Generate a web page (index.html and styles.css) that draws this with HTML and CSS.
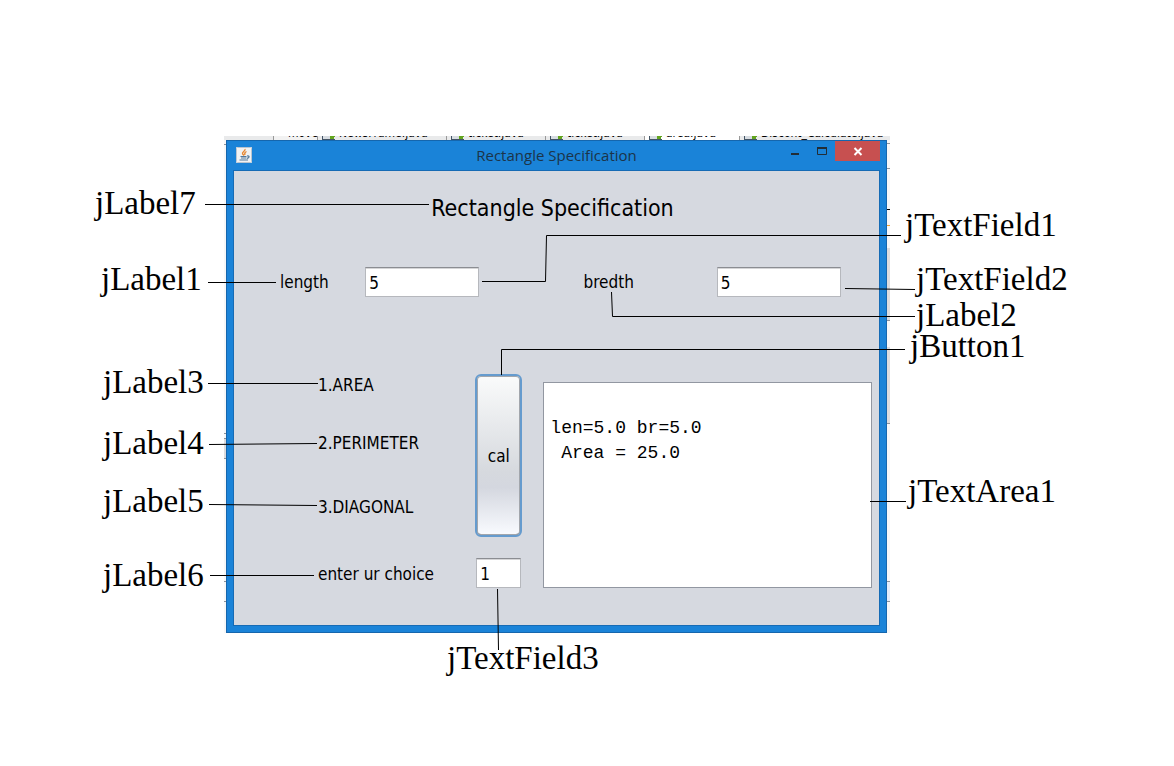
FILE: index.html
```
<!DOCTYPE html>
<html lang="en">
<head>
<meta charset="utf-8">
<title>Rectangle Specification</title>
<link rel="stylesheet" href="styles.css">
</head>
<body>
<main class="diagram">
  <div class="backdrop">
    <div class="tabs">
      <span class="tab tab-first">move</span>
      <span class="tab tab-news"><i class="file"></i>NewsFrame.java</span>
      <span class="tab tab-ticket"><i class="file"></i>ticket.java</span>
      <span class="tab tab-ticket"><i class="file"></i>ticket.java</span>
      <span class="tab tab-area"><i class="file"></i>area.java</span>
      <span class="tab tab-last"><i class="file"></i>Discont_Calculate.java</span>
    </div>
    <section class="window">
      <header class="titlebar">
        <svg class="java" viewBox="0 0 16 16" aria-hidden="true">
          <rect width="16" height="16" rx="1" fill="#f1f2f3"/>
          <rect x=".5" y=".5" width="15" height="15" rx="1" fill="none" stroke="#b9c4cf"/>
          <path d="M9 2C10 4 5.500 5 6.500 6.800L8 8.500M10.500 4.500C8 5.500 8.500 6.500 9 8" fill="none" stroke="#e8862e" stroke-width="1.300"/>
          <path d="M4.500 9.500H10.500M5 11H10.500M11 9C14 8.500 13.500 11 11 11.300M3.500 13H12" fill="none" stroke="#54799c" stroke-width="1.200"/>
        </svg>
        <span class="caption">Rectangle Specification</span>
        <div class="controls">
          <button class="control" aria-label="Minimize"><svg viewBox="0 0 27 20"><path d="M10 13H18" stroke="#222d36" stroke-width="2"/></svg></button>
          <button class="control" aria-label="Maximize"><svg viewBox="0 0 27 20"><path d="M9.500 7V13.500H18.500V7" fill="none" stroke="#222d36"/><path d="M9 7H19" stroke="#222d36" stroke-width="2"/></svg></button>
          <button class="control close" aria-label="Close"><svg viewBox="0 0 45 20"><path d="M19.500 7L26.500 14M26.500 7L19.500 14" stroke="#fff" stroke-width="2"/></svg></button>
        </div>
      </header>
      <form class="client">
        <h1 class="heading">Rectangle Specification</h1>
        <div class="sizes">
          <label for="length">length</label>
          <input id="length" class="field" value="5">
          <label class="bredth" for="bredth">bredth</label>
          <input id="bredth" class="field" value="5">
        </div>
        <div class="work">
          <div class="choices">
            <span>1.AREA</span>
            <span>2.PERIMETER</span>
            <span>3.DIAGONAL</span>
            <label for="choice">enter ur choice</label>
          </div>
          <div class="action">
            <button type="button" class="cal">cal</button>
            <input id="choice" class="field" value="1">
          </div>
          <textarea class="result" aria-label="Result">

len=5.0 br=5.0
 Area = 25.0</textarea>
        </div>
      </form>
    </section>
  </div>

  <svg class="leaders" viewBox="0 0 1174 766" preserveAspectRatio="none" aria-hidden="true">
    <g fill="#dcdcde">
      <rect x="887" y="248" width="3" height="72"/>
      <rect x="887" y="347" width="3" height="76"/>
      <rect x="887" y="582" width="3" height="19" fill="#e3edfa"/>
      <rect x="224" y="439" width="2" height="19"/>
      <rect x="887" y="209" width="3" height="1" fill="#000"/>
      <rect x="887" y="225" width="3" height="1" fill="#f0a030"/>
    </g>
    <path class="tick" d="M224 144.500h2M224 433.500h2M224 438.500h2M224 458.500h2M224 581.500h2M224 601.500h2M887 143.500h3M887 168.500h3M887 320.500h3M887 423.500h3M887 581.500h3M887 601.500h3"/>
    <path class="line" d="M205 204.500H429M208 282.500H276M208 383.500H318M209 444.500L317 443.500M209 504.500L317 505.500M210 575.500H314M482 281.500H545.500L546.500 235.500H901M845 288.500L915 289.500M611.500 292L612.500 316.500H915M501.500 375V349.500H905M870 501.500H906M497.500 589L498.500 650"/>
  </svg>

  <span class="callout label7">jLabel7</span>
  <span class="callout label1">jLabel1</span>
  <span class="callout label3">jLabel3</span>
  <span class="callout label4">jLabel4</span>
  <span class="callout label5">jLabel5</span>
  <span class="callout label6">jLabel6</span>
  <span class="callout field1">jTextField1</span>
  <span class="callout field2">jTextField2</span>
  <span class="callout label2">jLabel2</span>
  <span class="callout button1">jButton1</span>
  <span class="callout area1">jTextArea1</span>
  <span class="callout field3">jTextField3</span>
</main>
</body>
</html>
```
FILE: styles.css
```
* { box-sizing: border-box; }
body { margin: 0; background: #fff; color: #000; }

.diagram { position: relative; min-height: 766px; padding: 136px 284px 0 224px; }

.backdrop { padding: 0 3px 0 2px; background: #f6f7f8; }
.tabs {
  display: flex;
  align-items: flex-end;
  height: 4px;
  overflow: hidden;
  margin: 0 -3px 0 -2px;
  background: #e9eaeb;
  font: 12px/13px "DejaVu Sans Condensed", "DejaVu Sans", sans-serif;
  white-space: nowrap;
}
.tab { display: flex; align-items: flex-end; flex: none; overflow: hidden; border-right: 1px solid #999; }
.tab-first { width: 94px; padding-left: 64px; background: linear-gradient(90deg, #e9eaeb 49px, #999 49px, #999 50px, #f2f2f2 50px); }
.tab-news { width: 129px; }
.tab-ticket { width: 99px; }
.tab-area { width: 95px; background: #fff; }
.tab-last { flex: 1; border: 0; }
.file { width: 13px; height: 4px; margin: 0 4px; border-bottom: 1px solid #456; border-left: 1px solid #456; background: linear-gradient(115deg, #d8dde2 7px, #62a51e 7px, #62a51e 11px, transparent 11px); }

.window { padding: 0 6px 6px; border: 1px solid #1566ad; background: #1a83d8; }
.titlebar { position: relative; display: flex; align-items: center; height: 29px; padding: 0 0 2px 3px; }
.java { width: 16px; height: 16px; }
.caption { flex: 1; padding-right: 19px; text-align: center; color: #1c3449; font: 15px/20px "Open Sans", sans-serif; }
.controls { position: absolute; top: 0; right: 0; display: flex; }
.control { width: 27px; height: 20px; padding: 0; border: 0; background: none; }
.control svg { display: block; width: 100%; height: 100%; }
.close { width: 45px; background: #c75050; }

.client {
  padding: 20px 0 37px;
  border: 1px solid #166bb5;
  background: #d6d9e0;
  font: 17px/22px "DejaVu Sans Condensed", "DejaVu Sans", sans-serif;
}
.heading { margin: 0; padding-right: 8px; text-align: center; font-size: 23px; line-height: 34px; font-weight: 400; }
.sizes { display: grid; grid-template-columns: 85fr 114fr 104fr 133fr 124fr 38fr; align-items: center; padding: 42px 0 0 46px; }
.bredth { grid-column: 4; }
.field {
  width: 100%;
  min-width: 0;
  height: 30px;
  padding: 1px 3px 0;
  border: 1px solid #b6b8bd;
  border-top-color: #8b8d92;
  border-radius: 0;
  background: #fff;
  box-shadow: inset 0 1px #d5d5d7;
  color: #000;
  font: inherit;
}
.work { display: grid; grid-template-columns: 157fr 47fr 349fr; padding: 77px 7px 0 84px; }
.choices { display: grid; grid-template-rows: 58px 64px 67px 22px; }
.action { display: flex; flex-direction: column; align-items: center; gap: 21px; }
.cal {
  width: 100%;
  height: 163px;
  padding: 0;
  border: 2px solid #659bce;
  border-radius: 6px;
  background: linear-gradient(#fafbfb, #d6d9de 60%, #d4d7df 70%, #f9fbff);
  box-shadow: inset 0 0 0 1px #a2a6ac, inset 0 -1px #555d66;
  color: #000;
  font: inherit;
}
.action .field { width: 45px; }
.result {
  height: 206px;
  min-width: 0;
  margin: 8px 0 0 21px;
  padding: 8px 6px;
  border: 1px solid #9297a1;
  resize: none;
  background: #fff;
  color: #000;
  font: 18px/25px "Liberation Mono", monospace;
}

.leaders { position: absolute; top: 0; left: 0; width: 100%; height: 766px; }
.line { fill: none; stroke: #000; }
.tick { fill: none; stroke: #8b929b; }

.callout { position: absolute; font: 33px/30px "Liberation Serif", serif; white-space: nowrap; }
.label7 { top: 188px; left: 95px; }
.label1 { top: 264px; left: 101px; }
.label3 { top: 367px; left: 103px; }
.label4 { top: 428px; left: 103px; }
.label5 { top: 486px; left: 103px; }
.label6 { top: 560px; left: 103px; }
.field1 { top: 210px; left: 905px; }
.field2 { top: 264px; left: 916px; }
.label2 { top: 300px; left: 916px; }
.button1 { top: 331px; left: 910px; }
.area1 { top: 476px; left: 908px; }
.field3 { top: 643px; left: 447px; }
```
